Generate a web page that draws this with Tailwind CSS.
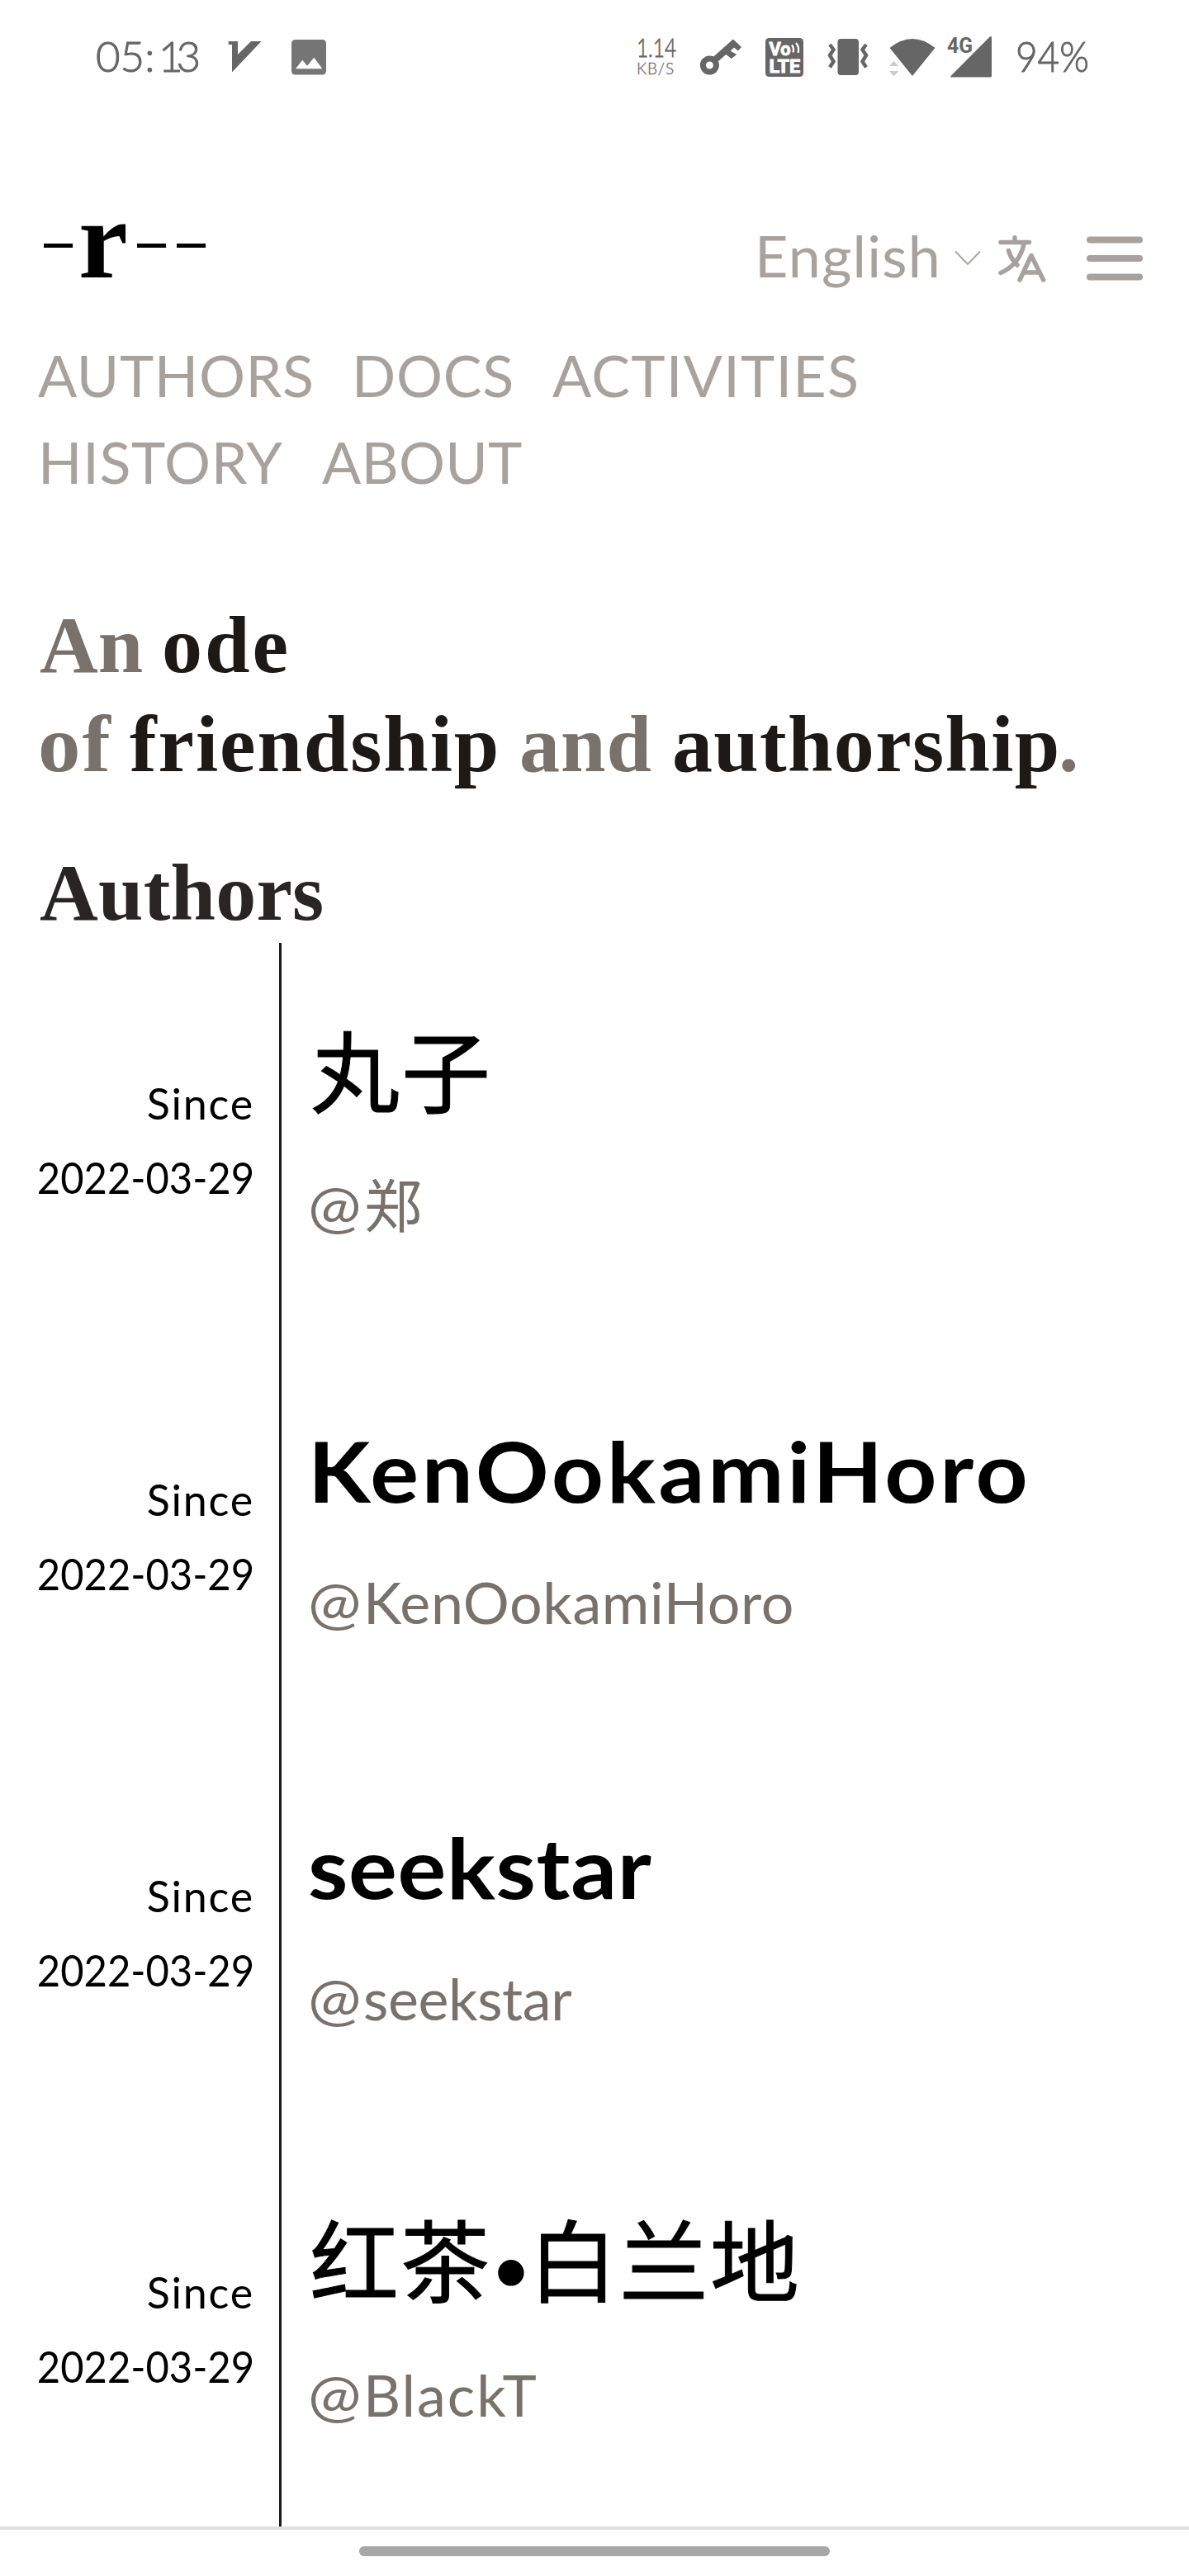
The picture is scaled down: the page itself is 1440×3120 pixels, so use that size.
<!DOCTYPE html>
<html lang="en">
<head>
<meta charset="utf-8">
<title>-r--</title>
<script src="https://cdn.jsdelivr.net/npm/@tailwindcss/browser@4"></script>
</head>
<body class="bg-white">
<div class="flex h-[3120px] w-[1440px] flex-col overflow-hidden bg-white font-['Lato','Noto_Sans_CJK_SC',sans-serif] text-black">

  <!-- Status bar -->
  <div class="flex h-[138px] shrink-0 items-center pl-[116px] text-[#666]">
    <div class="-mt-[2px] flex w-[160px] text-[51px] leading-[60px] font-light [-webkit-text-stroke:1px_#666]"><span class="w-[76px]">05:</span><span class="tracking-[-8px]">13</span></div>
    <svg class="h-[40px] w-[42px]" viewBox="0 0 42 40" fill="#666"><path d="M.7 1H12V17L28 1H40.5L5 38.5V5H.7z"/></svg>
    <svg class="ml-[35px] h-[43px] w-[42px]" viewBox="0 0 42 43"><rect width="42" height="42.5" rx="4.5" fill="#757575"/><path d="M5 35.3L13.3 24.7L19 31.7L27.3 21.7L37.3 35.3z" fill="#fff"/></svg>
    <div class="ml-[376px] flex w-[76px] flex-col font-light">
      <span class="origin-left scale-x-[.76] text-[32px] leading-[28px] [-webkit-text-stroke:0.8px_#666]">1.14</span>
      <span class="text-[19px] leading-[24px] tracking-[.9px] [-webkit-text-stroke:0.3px_#666]">KB/S</span>
    </div>
    <svg class="h-[44px] w-[52px]" viewBox="0 0 52 44"><circle cx="12.4" cy="32" r="8" fill="none" stroke="#666" stroke-width="7"/><path d="M40.9 .5L51 10L46.8 14.6L42 10.5L37.7 14.7L45.2 19L38.9 24L32.2 19L22 28L15.6 23z" fill="#666"/></svg>
    <svg class="ml-[28px] h-[47px] w-[46px]" viewBox="0 0 46 47" font-family="Roboto" font-weight="700" fill="#fff"><rect width="46" height="47" rx="4.5" fill="#666"/><text x="4.500" y="21" font-size="22.500" textLength="26" lengthAdjust="spacingAndGlyphs" stroke="#fff">Vo</text><text x="4.500" y="42" font-size="22.500" textLength="37.500" lengthAdjust="spacingAndGlyphs" stroke="#fff">LTE</text><path d="M32 8.500q3 4 1.500 9M37 6q4.500 5 2.500 12" fill="none" stroke="#fff" stroke-width="2.300"/></svg>
    <svg class="ml-[29px] h-[44px] w-[50px]" viewBox="0 0 50 44"><rect x="12.500" width="25.500" height="44" rx="4" fill="#666"/><path d="M3 7L7.500 13L3 20L7.500 27.500L3 34.500M47 7L42.500 13L47 20L42.500 27.500L47 34.500" fill="none" stroke="#666" stroke-width="4.500"/></svg>
    <svg class="ml-[25px] h-[47px] w-[56px]" viewBox="0 0 56 47"><path d="M.5 12Q28 -10 55.500 12L28 46z" fill="#666"/><path d="M0 34H11.300L5.700 27.700zM0 40H11.300L5.700 46.300z" fill="#ccc"/></svg>
    <svg class="ml-[14px] h-[51px] w-[55px] overflow-visible" viewBox="0 0 55 51" fill="#666"><path d="M54 1.500V48q0 1.500-1.500 1.500H5q-1.500 0-.5-1.500L51.500 .8q2.500-2 2.500 .7z"/><text x="0" y="19.500" font-family="Roboto" font-weight="700" font-size="25.500" textLength="31" lengthAdjust="spacingAndGlyphs">4G</text></svg>
    <span class="-mt-[2px] ml-[28px] origin-left scale-x-[.9] text-[51px] leading-[60px] font-light [-webkit-text-stroke:1px_#666]">94%</span>
  </div>

  <div class="flex h-[2922px] flex-col overflow-hidden pt-[85px]">
    <!-- Header -->
    <header class="flex h-[179px] shrink-0 justify-between pr-[56px] pl-[48px] text-[#a8a29e]">
      <div class="flex font-['Liberation_Serif',serif] text-[135px] leading-[135px] font-bold text-black">
        <span class="w-[47px] -translate-y-[11px] scale-y-50 font-normal">-</span><span class="w-[66px]">r</span><span class="w-[48px] -translate-y-[11px] scale-y-50 font-normal">-</span><span class="w-[48px] -translate-y-[11px] scale-y-50 font-normal">-</span>
      </div>
      <div class="flex h-[90px] translate-y-[41px] items-center">
        <span class="w-[242px] text-[70px] leading-[90px] tracking-[1.2px]">English</span>
        <svg class="mt-[8px] h-[20px] w-[33px]" viewBox="0 0 33 20" fill="none" stroke="#a8a29e" stroke-width="1.800"><path d="M1 1.500L16 17L31 1.500"/></svg>
        <svg class="ml-[20px] mt-[8px] h-[57px] w-[58px]" viewBox="0 0 58 57" fill="none" stroke="#a8a29e" stroke-width="5.500" stroke-linecap="round" stroke-linejoin="round"><path d="M3 8.500H37.500M20 2.800V8M31 10.500C28 26 18 39 3 45.500M12.500 18.500C14.500 26 18 31 23 36M26 54L40 24.500L54.600 54M30.500 45H50"/></svg>
        <svg class="ml-[49px] mt-[8px] h-[54px] w-[68px]" viewBox="0 0 68 54" stroke="#a8a29e" stroke-width="8" stroke-linecap="round"><path d="M4 4.500H64M4 27H64M4 49.500H64"/></svg>
      </div>
    </header>

    <!-- Navigation -->
    <nav class="shrink-0 pl-[46px] text-[70px] leading-[105px] text-[#a8a29e]">
      <div class="flex"><a class="w-[380px] tracking-[.6px]">AUTHORS</a><a class="w-[243px] tracking-[.7px]">DOCS</a><a class="tracking-[1.2px]">ACTIVITIES</a></div>
      <div class="flex"><a class="w-[344px] tracking-[.7px]">HISTORY</a><a class="tracking-[.2px]">ABOUT</a></div>
    </nav>

    <!-- Tagline -->
    <section class="mt-[109px] shrink-0 pl-[46px] font-['Liberation_Serif',serif] text-[98px] leading-[120px] font-bold text-[#78716c]">
      <div class="flex"><span class="w-[150px] pl-[2px]">An</span><span class="tracking-[3px] text-[#1c1917]">ode</span></div>
      <div class="flex"><span class="w-[111px] origin-left scale-x-[1.05] tracking-[2px]">of</span><span class="w-[472px] tracking-[1.9px] text-[#1c1917]">friendship</span><span class="w-[185px] tracking-[1px]">and</span><span class="w-[468px] tracking-[1.3px] text-[#1c1917]">authorship</span><span>.</span></div>
    </section>

    <h2 class="mt-[60px] shrink-0 pl-[48px] font-['Liberation_Serif',serif] text-[98px] leading-[120px] font-bold tracking-[.2px] text-[#292524]">Authors</h2>

    <!-- Author timeline -->
    <ul class="mt-px shrink-0">
      <li class="flex h-[480px]">
        <div class="flex w-[341px] shrink-0 flex-col border-r-[3px] border-[#1c1917] pt-[149px] pr-[30px] text-right text-[52px] leading-[90px]"><span class="tracking-[1.8px]">Since</span><span class="origin-right scale-x-[.94]">2022-03-29</span></div>
        <div class="pt-[99px] pl-[32px]">
          <h3 class="-translate-y-[3px] pl-[3px] text-[108px] leading-[120px] tracking-[2px] [-webkit-text-stroke:1px_#000]">丸子</h3>
          <p class="mt-[54px] flex text-[70px] leading-[90px] text-[#78716c]"><span class="w-[68px] origin-left scale-x-[1.1]">@</span><span>郑</span></p>
        </div>
      </li>
      <li class="flex h-[480px]">
        <div class="flex w-[341px] shrink-0 flex-col border-r-[3px] border-[#1c1917] pt-[149px] pr-[30px] text-right text-[52px] leading-[90px]"><span class="tracking-[1.8px]">Since</span><span class="origin-right scale-x-[.94]">2022-03-29</span></div>
        <div class="pt-[99px] pl-[32px]">
          <h3 class="origin-left scale-x-[1.08] text-[102px] leading-[120px] font-bold tracking-[3.5px]">KenOokamiHoro</h3>
          <p class="mt-[54px] flex text-[70px] leading-[90px] text-[#78716c]"><span class="w-[67px] origin-left scale-x-[1.1]">@</span><span class="tracking-[.6px]">KenOokamiHoro</span></p>
        </div>
      </li>
      <li class="flex h-[480px]">
        <div class="flex w-[341px] shrink-0 flex-col border-r-[3px] border-[#1c1917] pt-[149px] pr-[30px] text-right text-[52px] leading-[90px]"><span class="tracking-[1.8px]">Since</span><span class="origin-right scale-x-[.94]">2022-03-29</span></div>
        <div class="pt-[99px] pl-[32px]">
          <h3 class="origin-left scale-x-[1.08] text-[102px] leading-[120px] font-bold tracking-[.6px]">seekstar</h3>
          <p class="mt-[54px] flex text-[70px] leading-[90px] text-[#78716c]"><span class="w-[67px] origin-left scale-x-[1.1]">@</span><span class="tracking-[-.4px]">seekstar</span></p>
        </div>
      </li>
      <li class="flex h-[480px]">
        <div class="flex w-[341px] shrink-0 flex-col border-r-[3px] border-[#1c1917] pt-[149px] pr-[30px] text-right text-[52px] leading-[90px]"><span class="tracking-[1.8px]">Since</span><span class="origin-right scale-x-[.94]">2022-03-29</span></div>
        <div class="pt-[99px] pl-[32px]">
          <h3 class="h-[120px] -translate-y-[3px] pl-[2px] text-[108px] leading-[120px] tracking-[2px] [-webkit-text-stroke:1px_#000]">红茶<span class="inline-block w-[45px] -translate-y-[6px] pl-[3px] text-left text-[72px] leading-none font-bold tracking-normal [-webkit-text-stroke:0px]">•</span>白兰地</h3>
          <p class="mt-[54px] flex text-[70px] leading-[90px] text-[#78716c]"><span class="w-[67px] origin-left scale-x-[1.1]">@</span><span class="tracking-[2px]">BlackT</span></p>
        </div>
      </li>
    </ul>
  </div>

  <!-- Gesture bar -->
  <div class="flex h-[60px] shrink-0 justify-center border-t-4 border-[#e0e0e0] pt-[20px]">
    <div class="h-[12px] w-[570px] rounded-full bg-[#a7a7a7]"></div>
  </div>
</div>
</body>
</html>
